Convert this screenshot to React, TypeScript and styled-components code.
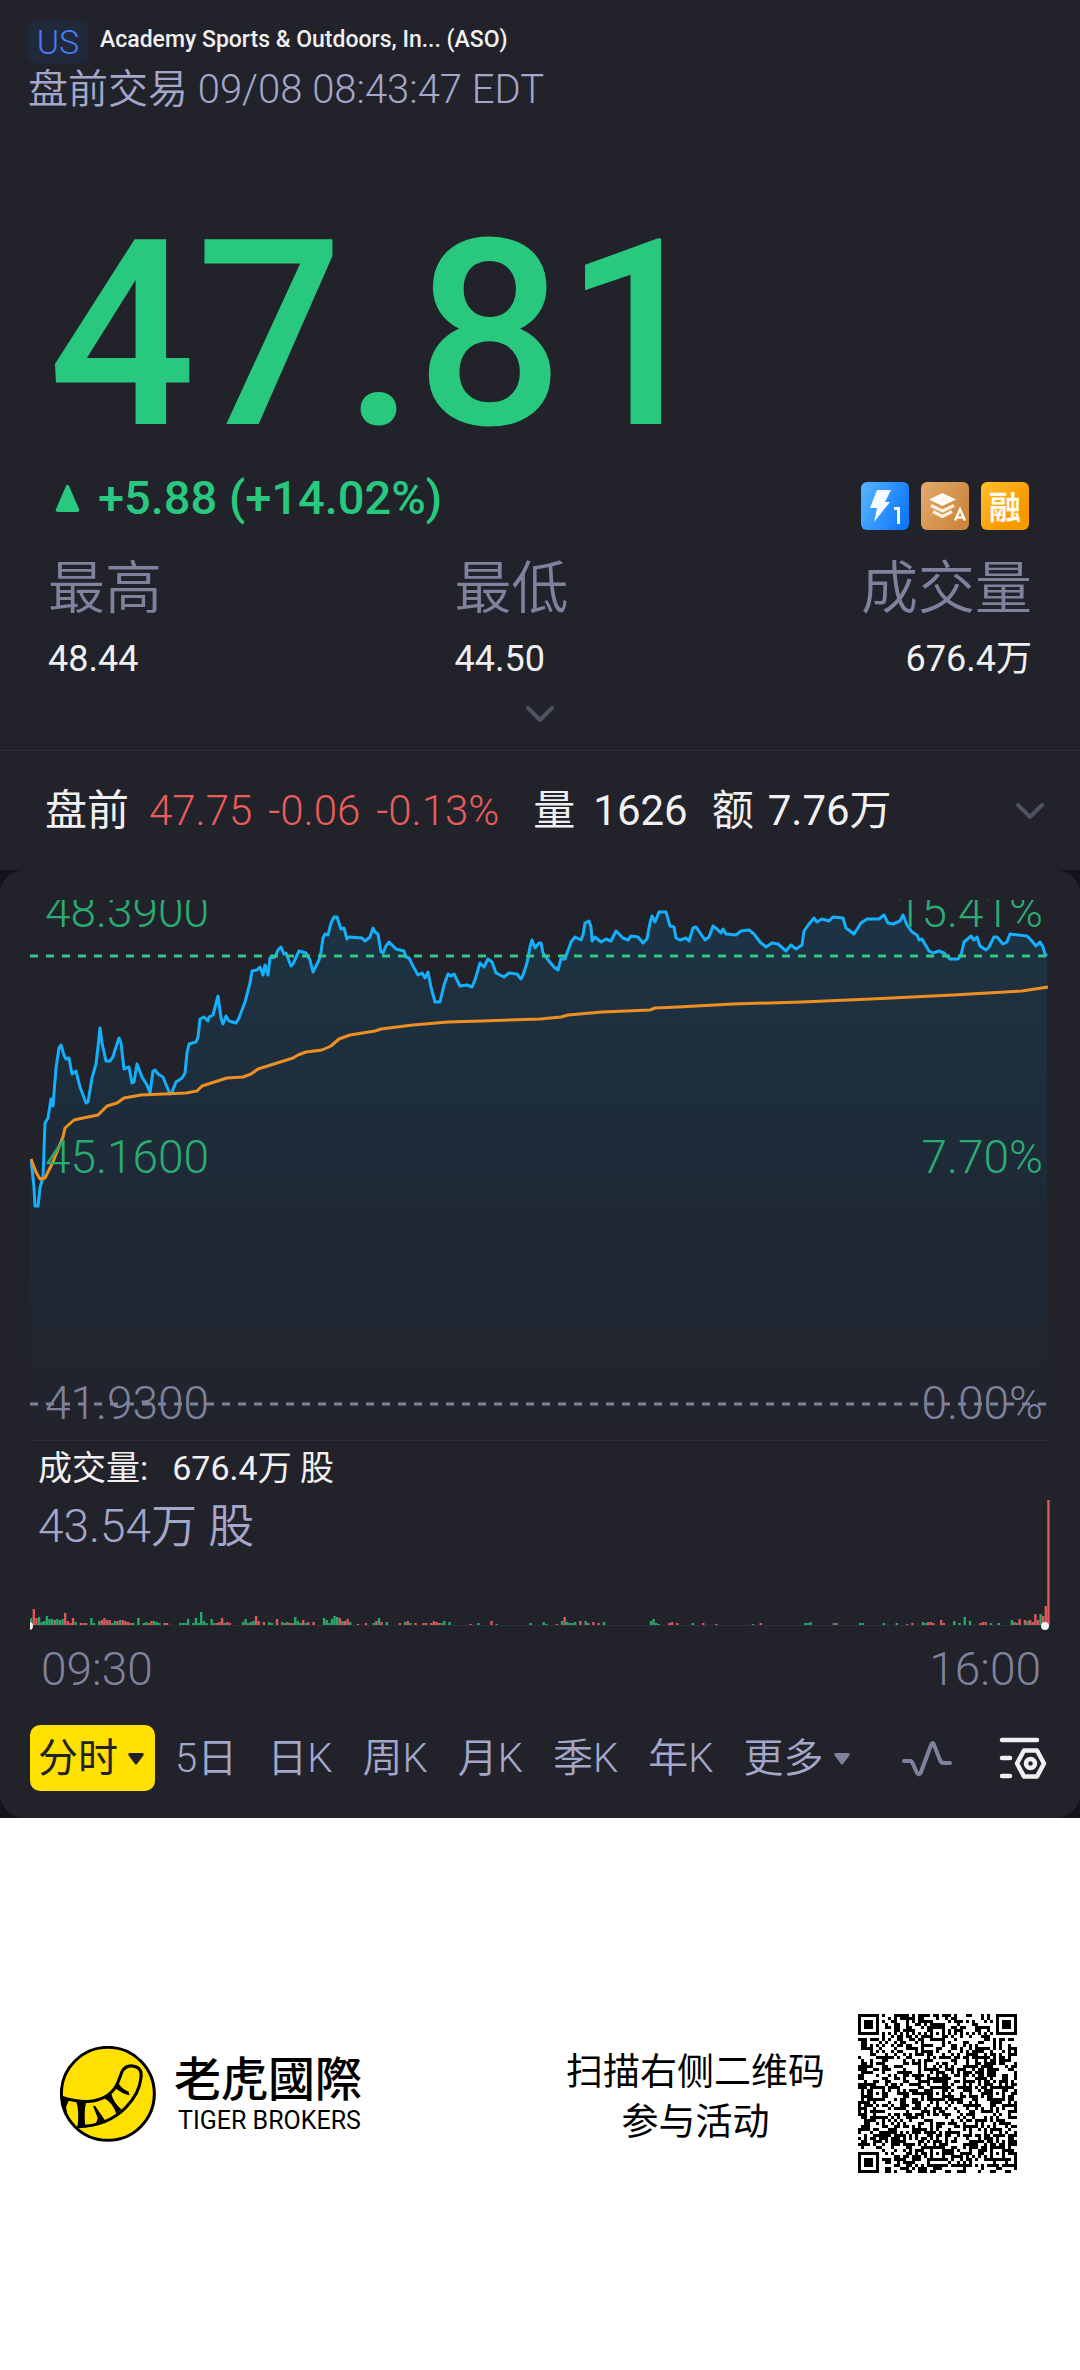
import React from "react";
import styled, { createGlobalStyle } from "styled-components";

const color = {
  panel: "#22222b",
  gutter: "#14131c",
  line: "#2d2e3b",
  text: "#f0f0f0",
  soft: "#a3a8ca",
  muted: "#7f829c",
  faint: "#4f5263",
  up: "#28c97f",
  upDim: "#2bab72",
  down: "#e85e5a",
  price: "#14b0fb",
  average: "#ee8f22",
  brand: "#ffe100",
};

const GlobalStyle = createGlobalStyle`
  * { box-sizing: border-box; }
  body {
    margin: 0;
    background: #fff;
    font-family: Roboto, "Noto Sans CJK SC", sans-serif;
  }
  button {
    border: 0;
    padding: 0;
    background: none;
    color: inherit;
    font: inherit;
    cursor: pointer;
  }
  h1, p, dl, dd, dt { margin: 0; font-weight: inherit; }
  svg { display: block; }
`;

const Screen = styled.main`
  background: ${color.panel};
  color: ${color.text};
`;

const Header = styled.header`
  padding: 21px 28px 0;
`;

const TitleRow = styled.div`
  display: flex;
  align-items: center;
  gap: 12px;
`;

const Market = styled.span`
  width: 60px;
  border-radius: 6px;
  background: #20283b;
  color: #477df0;
  font-size: 34px;
  font-weight: 350;
  line-height: 42px;
  text-align: center;
`;

const Company = styled.h1`
  padding-bottom: 4px;
  font-size: 23px;
  font-weight: 500;
  line-height: 36px;
`;

const Session = styled.p`
  color: ${color.soft};
  font-size: 40px;
  font-weight: 350;
  line-height: 54px;
`;

const Quote = styled.section`
  padding: 88px 48px 22px;
  border-bottom: 1px solid ${color.line};
`;

const Price = styled.p`
  color: ${color.up};
  font-size: 260px;
  font-weight: 500;
  line-height: 260px;
`;

const ChangeRow = styled.div`
  display: flex;
  align-items: flex-end;
  justify-content: space-between;
  margin-top: 5px;
`;

const Change = styled.p`
  display: flex;
  align-items: center;
  gap: 18px;
  padding: 0 0 4px 7px;
  color: ${color.up};
  font-size: 47px;
  font-weight: 500;
  line-height: 56px;
`;

const Badges = styled.div`
  display: flex;
  gap: 12px;
  padding-right: 3px;
`;

const Stats = styled.dl`
  display: flex;
  justify-content: space-between;
  margin-top: 21px;
`;

const Stat = styled.div<{ $end?: boolean }>`
  text-align: ${(p) => (p.$end ? "right" : "left")};

  dt {
    color: ${color.muted};
    font-family: "Noto Sans CJK SC", sans-serif;
    font-size: 57px;
    font-weight: 350;
    line-height: 64px;
  }

  dd {
    margin-top: 22px;
    font-size: 36px;
    line-height: 44px;
  }
`;

const MoreButton = styled.button`
  display: block;
  margin: 19px auto 0;
  height: 28px;
`;

const Extended = styled.section`
  display: flex;
  align-items: center;
  padding: 32px 34px 31px 45px;
  font-size: 42px;
  line-height: 56px;

  button { margin-left: auto; }
`;

const Field = styled.p<{ $gap: number; $down?: boolean }>`
  display: flex;
  gap: 16px;
  margin-left: ${(p) => p.$gap}px;
  color: ${(p) => (p.$down ? color.down : color.text)};
  font-weight: ${(p) => (p.$down ? 350 : 400)};
`;

const Gutter = styled.div`
  background: ${color.gutter};
`;

const Panel = styled.section`
  padding: 30px 30px 27px;
  border-radius: 24px;
  background: ${color.panel};
`;

const Plot = styled.div`
  position: relative;
  overflow: hidden;
  border-bottom: 1px solid ${color.line};

  svg { width: 100%; height: auto; }
`;

const Scale = styled.div`
  position: absolute;
  inset: -17px 7px 9px 15px;
  display: flex;
  flex-direction: column;
  justify-content: space-between;
`;

const ScaleRow = styled.div<{ $flat?: boolean }>`
  display: flex;
  justify-content: space-between;
  color: ${(p) => (p.$flat ? color.muted : color.upDim)};
  font-size: 46px;
  font-weight: 350;
  line-height: 56px;
`;

const Volume = styled.div`
  position: relative;

  svg { width: 100%; height: auto; }
`;

const VolumeText = styled.div`
  position: absolute;
  inset: 5px auto auto 8px;
`;

const VolumeLegend = styled.p`
  display: flex;
  gap: 24px;
  font-size: 34px;
  line-height: 44px;
`;

const VolumePeak = styled.p`
  margin-top: 8px;
  color: ${color.soft};
  font-size: 46px;
  font-weight: 350;
  line-height: 56px;
`;

const Times = styled.div`
  display: flex;
  justify-content: space-between;
  margin-top: 10px;
  padding: 0 9px 0 11px;
  color: ${color.muted};
  font-size: 46px;
  font-weight: 350;
  line-height: 56px;
`;

const Tabs = styled.nav`
  display: flex;
  align-items: center;
  gap: 30px;
  margin-top: 28px;
  color: ${color.soft};
`;

const Tab = styled.button<{ $active?: boolean }>`
  display: flex;
  align-items: center;
  gap: 10px;
  margin-right: ${(p) => (p.$active ? -10 : 0)}px;
  padding: ${(p) => (p.$active ? "2px 11px 0 8px" : "2px 0 0")};
  border-radius: 10px;
  background: ${(p) => (p.$active ? color.brand : "none")};
  color: ${(p) => (p.$active ? "#22222b" : color.soft)};
  font-size: 40px;
  font-weight: ${(p) => (p.$active ? 400 : 350)};
  line-height: 64px;
  white-space: nowrap;
`;

const Tools = styled.div`
  display: flex;
  align-items: center;
  gap: 46px;
  margin-left: auto;
  padding-right: 3px;
`;

const Footer = styled.footer`
  display: flex;
  align-items: center;
  padding: 196px 63px 197px 60px;
  background: #fff;
  color: #000;
`;

const Brand = styled.div`
  display: flex;
  align-items: center;
  gap: 18px;
  margin-right: auto;
`;

const BrandName = styled.p`
  font-family: "Noto Sans CJK TC", sans-serif;
  font-size: 47px;
  font-weight: 500;
  line-height: 50px;
`;

const BrandLatin = styled.p`
  padding: 4px 0 0 4px;
  font-size: 25px;
  line-height: 32px;
`;

const ScanHint = styled.p`
  margin-right: 33px;
  font-family: "Noto Sans CJK SC", sans-serif;
  font-size: 37px;
  line-height: 50px;
  text-align: center;
`;

const PRICE =
  "1,259 4,287 5,306 8,306 10,288 13,277 15,223 18,218 21,199 23,206 26,168 29,148 31,145 34,155 36,159 39,158 42,174 46,171 50,187 56,203 58,202 62,178 66,164 68,147 70,128 72,143 76,161 80,161 83,157 85,150 89,138 91,143 94,169 99,167 102,183 104,182 107,164 112,177 117,185 120,193 123,171 125,170 128,174 133,177 137,187 140,194 142,192 146,182 152,178 155,173 157,153 159,144 166,142 168,137 170,119 174,117 178,121 179,117 183,115 188,96 191,118 193,124 196,116 199,121 206,123 209,118 215,102 220,83 222,71 227,70 230,67 233,75 235,65 238,75 240,58 245,57 248,50 251,47 254,54 256,53 261,66 263,64 269,51 276,53 280,60 283,72 289,60 291,52 293,38 295,34 298,35 301,23 304,17 307,17 311,29 314,28 317,39 319,37 332,38 335,41 340,37 343,28 345,32 348,34 351,52 353,53 356,46 359,42 366,49 374,51 376,57 379,58 383,66 388,75 392,73 395,78 398,72 401,87 405,102 410,102 414,85 418,74 421,76 424,74 430,86 437,85 442,87 445,80 450,63 454,67 458,59 462,62 466,73 474,77 479,73 487,74 491,79 493,75 497,63 500,47 502,40 505,48 509,43 511,43 513,53 518,60 524,67 528,70 531,59 535,59 541,42 545,37 551,40 553,35 555,23 559,21 561,27 562,41 565,37 571,42 576,39 581,41 586,31 593,38 598,40 601,36 608,37 613,43 617,39 620,23 622,16 625,22 629,12 636,12 640,26 644,27 646,38 650,40 656,38 659,41 663,28 666,27 675,40 679,37 683,26 687,29 691,33 693,29 696,34 706,35 711,31 719,30 724,34 730,42 736,47 742,43 748,44 756,51 761,45 766,49 772,45 774,31 779,24 784,18 787,22 792,19 799,21 803,17 813,18 816,28 824,34 831,23 837,19 849,19 854,15 858,23 863,24 870,21 873,15 877,25 882,32 887,35 889,40 892,39 899,51 903,53 909,51 914,53 920,59 928,59 931,55 934,42 941,36 944,40 947,37 950,46 956,50 959,47 964,37 967,37 973,44 977,42 980,34 997,36 1001,40 1006,46 1010,42 1013,47 1015,54 1017,56";

const AVERAGE =
  "1,259 6,272 10,279 15,278 22,264 29,247 33,237 35,228 44,220 53,218 68,215 77,206 87,203 94,198 111,195 156,193 167,191 172,186 197,178 213,177 221,174 228,169 263,158 268,155 276,152 292,150 301,146 309,139 320,135 345,131 351,129 383,125 418,122 452,121 510,119 531,117 538,115 572,112 620,110 625,108 648,107 703,104 772,102 841,99 923,95 992,91 1018,87";

// One entry per traded minute: slot, direction (g up, r down), bar height.
const VOLUME =
  "0g7 1r16 2r7 3g8 4g3 5g4 6g9 7g6 8g6 9r5 10g6 11g5 12g6 13r12 14r4 15r2 16r7 17g3 19r2 20r2 21r2 23g7 24g2 26g4 27r5 28r7 29r5 30r5 31g2 32g4 33r4 34g5 35r5 36r4 37r3 38r2 39g2 41g7 43g2 44g3 45r2 46r4 47g4 48g3 49g2 51r2 52r2 57g2 58g2 59g2 60g6 62g2 63g7 64g2 65g13 66g4 67g2 69g6 70g2 71r2 72r3 73r7 74g2 75r3 76r2 81g3 82g6 83r2 84g3 85g4 86r9 87r4 89r3 91g3 92g2 94r6 96g3 97r2 98g3 99r2 100r2 101g8 102g4 103g2 104r5 105g2 106r3 108r3 112g7 113g5 114g2 115g6 116g9 117g8 118r7 119g4 120r4 121r6 122g3 125r1 128r2 131g2 132r4 133g7 134r3 136g3 141r2 143g3 144r4 145g2 147r2 150r2 151r2 153r2 154r4 155r3 156r2 157g2 158g4 160g3 168r1 171g2 176r4 178g1 191g2 196g3 197g1 201r1 203g4 204r8 205g3 206g2 207g2 208g3 210r4 212g4 213r2 215r3 217r2 219g3 237g4 238g6 239g2 240g1 244r2 245r3 247r2 253g2 257r2 262r1 276g1 279r2 296g2 297g2 298g3 307g2 308r2 317g2 318g2 326g2 331g2 335r1 337r2 341g3 342g2 343r3 344r3 345r2 348r5 349r2 353g4 355g2 357g8 359g4 363r2 364r3 365r3 367g2 370g2 375g5 376r3 377g2 378r6 380r5 381g4 382r5 383r3 384r11 385r5 386g11 387r9 388r19 389r125";

const bars = VOLUME.split(" ").map((entry) => {
  const [, slot, side, height] = entry.match(/(\d+)([gr])(\d+)/)!;
  return { slot: Number(slot), up: side === "g", height: Number(height) };
});

function PriceChart() {
  return (
    <svg viewBox="0 0 1020 540" role="img" aria-label="分时走势">
      <defs>
        <linearGradient id="area" x1="0" y1="0" x2="0" y2="1">
          <stop offset="0" stopColor="#1d3444" />
          <stop offset="0.5" stopColor="#1e2a37" />
          <stop offset="1" stopColor="#22232c" />
        </linearGradient>
      </defs>
      <polygon points={`0,534 0,259 ${PRICE} 1017,534`} fill="url(#area)" />
      <polyline points={PRICE} fill="none" stroke={color.price} strokeWidth="3" strokeLinejoin="round" />
      <polyline points={AVERAGE} fill="none" stroke={color.average} strokeWidth="3" strokeLinejoin="round" />
      <line x1="0" x2="1017" y1="56" y2="56" stroke="#35c489" strokeWidth="3" strokeDasharray="8 8" />
      <line x1="0" x2="1017" y1="504" y2="504" stroke={color.muted} strokeWidth="3" strokeDasharray="8 8" />
    </svg>
  );
}

function VolumeChart() {
  return (
    <svg viewBox="0 0 1020 190" role="img" aria-label="成交量">
      <rect x="0" y="184" width="1020" height="1" fill={color.line} />
      {bars.map((bar) => (
        <rect
          key={bar.slot}
          x={bar.slot * 2.615}
          y={184 - bar.height}
          width="2.4"
          height={bar.height}
          fill={bar.up ? "#25a869" : "#d9595a"}
        />
      ))}
      <circle cx="-1" cy="185" r="4" fill="#f3f3f3" />
      <circle cx="1015" cy="185" r="4" fill="#f3f3f3" />
    </svg>
  );
}

function Chevron() {
  return (
    <svg width="32" height="28" viewBox="0 0 32 28" fill="none" stroke={color.faint} strokeWidth="4" strokeLinecap="round" strokeLinejoin="round">
      <path d="M4 8 16 20 28 8" />
    </svg>
  );
}

function Caret({ fill = "currentColor" }: { fill?: string }) {
  return (
    <svg width="16" height="12" viewBox="0 0 16 12" fill={fill}>
      <path d="M2 0h12q3 0 1 3L9 11q-1 1-2 0L1 3Q-1 0 2 0Z" />
    </svg>
  );
}

function FlashBadge() {
  return (
    <svg width="48" height="48" viewBox="0 0 48 48" role="img" aria-label="Level 1">
      <defs>
        <linearGradient id="flash" x1="0" y1="0.2" x2="1" y2="0.6">
          <stop offset="0" stopColor="#52b2ff" />
          <stop offset="1" stopColor="#0f78fb" />
        </linearGradient>
      </defs>
      <rect width="48" height="48" rx="6" fill="url(#flash)" />
      <path d="M16 8h14l-6 12h5L13 40l3-14H9Z" fill="#f4faff" />
      <path d="M33 25h6v17h-3V28h-3Z" fill="#f4faff" />
    </svg>
  );
}

function LayersBadge() {
  return (
    <svg width="48" height="48" viewBox="0 0 48 48" role="img" aria-label="盘口 A">
      <defs>
        <linearGradient id="layers" x1="0" y1="0" x2="1" y2="0.6">
          <stop offset="0" stopColor="#e2ab6d" />
          <stop offset="1" stopColor="#cd863c" />
        </linearGradient>
      </defs>
      <rect width="48" height="48" rx="6" fill="url(#layers)" />
      <path d="M21.500 11 35 17.500 21.500 24 8 17.500Z" fill="#fffaf2" />
      <path d="M10 23.500 21.500 29 33 23.500M12 29.500 21.500 34.500 31 29.500" fill="none" stroke="#fff0dc" strokeWidth="3.200" />
      <path d="M34 38.500 39 27.500 44 38.500M35.500 35.500H42.500" fill="none" stroke="#fffaf2" strokeWidth="2.400" />
    </svg>
  );
}

const MarginBadge = styled.span`
  width: 48px;
  height: 48px;
  border-radius: 6px;
  background: linear-gradient(130deg, #ffc02c, #f79a00 70%);
  color: #fffaf0;
  font-family: "Noto Sans CJK SC", sans-serif;
  font-size: 32px;
  font-weight: 700;
  line-height: 46px;
  text-align: center;
`;

function PulseIcon() {
  return (
    <svg width="52" height="44" viewBox="0 0 52 44" fill="none" stroke={color.muted} strokeWidth="4" strokeLinecap="round" strokeLinejoin="round">
      <path d="M3 25h6q2 0 3 3l4 9q2 3 4-1L30 9q2-4 3 0l6 15q1 3 4 3h6" />
    </svg>
  );
}

function SettingsIcon() {
  return (
    <svg width="48" height="44" viewBox="0 0 48 44" fill="none" stroke="#f0f0f0" strokeWidth="4.500" strokeLinecap="round" strokeLinejoin="round">
      <path d="M3 4h35M3 22h8M3 40h8" />
      <path d="M25 14.500h13l7 13-7 13H25l-7-13Z" />
      <circle cx="31.500" cy="27.500" r="4.500" />
    </svg>
  );
}

function TigerLogo() {
  return (
    <svg width="96" height="96" viewBox="0 0 285 285" role="img" aria-label="Tiger Brokers">
      <circle cx="142" cy="142" r="138" fill={color.brand} stroke="#000" strokeWidth="9" />
      <path
        d="M4 152Q50 166 82 165Q150 160 172 108L184 76Q196 55 220 60Q246 66 240 96Q236 140 196 182Q142 238 52 240"
        fill="none"
        stroke="#000"
        strokeWidth="9"
      />
      <path d="M3 148 28 158 18 180 22 206 44 238Q8 206 3 148ZM48 165H80Q70 180 75 240H52Q58 190 48 165ZM98 178Q106 176 110 186L132 218 134 226 106 234 112 214ZM128 154 152 142Q160 170 182 188L168 204Q156 166 128 154ZM162 124 172 108Q184 128 204 136L206 146Q184 142 162 124Z" />
    </svg>
  );
}

const QR_SIZE = 53;

// Finder, timing and alignment patterns follow the version 9 grid.
function qrModule(x: number, y: number, noise: () => number): boolean {
  const bit = noise() < 0.5;
  const last = QR_SIZE - 1;
  const corners = [[3, 3], [last - 3, 3], [3, last - 3]];
  for (const [cx, cy] of corners) {
    const ring = Math.max(Math.abs(x - cx), Math.abs(y - cy));
    if (ring <= 4) return ring !== 4 && ring !== 2;
  }
  const marks = [[26, 6], [6, 26], [26, 26], [46, 26], [26, 46], [46, 46]];
  for (const [cx, cy] of marks) {
    const ring = Math.max(Math.abs(x - cx), Math.abs(y - cy));
    if (ring <= 2) return ring !== 1;
  }
  if (x === 6 || y === 6) return (x + y) % 2 === 0;
  return bit;
}

function buildQr(): string {
  let seed = 20230908;
  const noise = () => {
    seed = (seed * 1103515245 + 12345) % 2147483648;
    return ((seed >> 8) & 1023) / 1024;
  };
  let path = "";
  for (let y = 0; y < QR_SIZE; y++) {
    for (let x = 0; x < QR_SIZE; x++) {
      if (qrModule(x, y, noise)) path += `M${x} ${y}h1v1h-1z`;
    }
  }
  return path;
}

const qrPath = buildQr();

function QrCode() {
  return (
    <svg width="159" height="159" viewBox="0 0 53 53" shapeRendering="crispEdges" role="img" aria-label="二维码">
      <path d={qrPath} />
    </svg>
  );
}

const stats = [
  { label: "最高", value: "48.44" },
  { label: "最低", value: "44.50" },
  { label: "成交量", value: "676.4万", end: true },
];

const scale = [
  { price: "48.3900", percent: "15.41%" },
  { price: "45.1600", percent: "7.70%" },
  { price: "41.9300", percent: "0.00%", flat: true },
];

const periods = ["5日", "日K", "周K", "月K", "季K", "年K"];

export default function App() {
  return (
    <>
      <GlobalStyle />
      <Screen>
        <Header>
          <TitleRow>
            <Market>US</Market>
            <Company>Academy Sports &amp; Outdoors, In... (ASO)</Company>
          </TitleRow>
          <Session>盘前交易 09/08 08:43:47 EDT</Session>
        </Header>

        <Quote>
          <Price>47.81</Price>
          <ChangeRow>
            <Change>
              <svg width="25" height="28" viewBox="0 0 25 28" fill="currentColor">
                <path d="M11 2q1.500-3 3 0l10 23q1 3-2 3H3q-3 0-2-3Z" />
              </svg>
              +5.88 (+14.02%)
            </Change>
            <Badges>
              <FlashBadge />
              <LayersBadge />
              <MarginBadge>融</MarginBadge>
            </Badges>
          </ChangeRow>
          <Stats>
            {stats.map((s) => (
              <Stat key={s.label} $end={s.end}>
                <dt>{s.label}</dt>
                <dd>{s.value}</dd>
              </Stat>
            ))}
          </Stats>
          <MoreButton aria-label="展开">
            <Chevron />
          </MoreButton>
        </Quote>

        <Extended>
          <Field $gap={0}>盘前</Field>
          <Field $gap={20} $down>
            <span>47.75</span>
            <span>-0.06</span>
            <span>-0.13%</span>
          </Field>
          <Field $gap={34}>量</Field>
          <Field $gap={18}>1626</Field>
          <Field $gap={24}>额</Field>
          <Field $gap={14}>7.76万</Field>
          <button aria-label="展开盘前">
            <Chevron />
          </button>
        </Extended>

        <Gutter>
          <Panel>
            <Plot>
              <PriceChart />
              <Scale>
                {scale.map((row) => (
                  <ScaleRow key={row.price} $flat={row.flat}>
                    <span>{row.price}</span>
                    <span>{row.percent}</span>
                  </ScaleRow>
                ))}
              </Scale>
            </Plot>
            <Volume>
              <VolumeChart />
              <VolumeText>
                <VolumeLegend>
                  <span>成交量:</span>
                  <span>676.4万 股</span>
                </VolumeLegend>
                <VolumePeak>43.54万 股</VolumePeak>
              </VolumeText>
            </Volume>
            <Times>
              <span>09:30</span>
              <span>16:00</span>
            </Times>
            <Tabs>
              <Tab $active>
                分时
                <Caret />
              </Tab>
              {periods.map((p) => (
                <Tab key={p}>{p}</Tab>
              ))}
              <Tab>
                更多
                <Caret fill={color.muted} />
              </Tab>
              <Tools>
                <button aria-label="指标">
                  <PulseIcon />
                </button>
                <button aria-label="图表设置">
                  <SettingsIcon />
                </button>
              </Tools>
            </Tabs>
          </Panel>
        </Gutter>
      </Screen>

      <Footer>
        <Brand>
          <TigerLogo />
          <div>
            <BrandName>老虎國際</BrandName>
            <BrandLatin>TIGER BROKERS</BrandLatin>
          </div>
        </Brand>
        <ScanHint>
          扫描右侧二维码
          <br />
          参与活动
        </ScanHint>
        <QrCode />
      </Footer>
    </>
  );
}
